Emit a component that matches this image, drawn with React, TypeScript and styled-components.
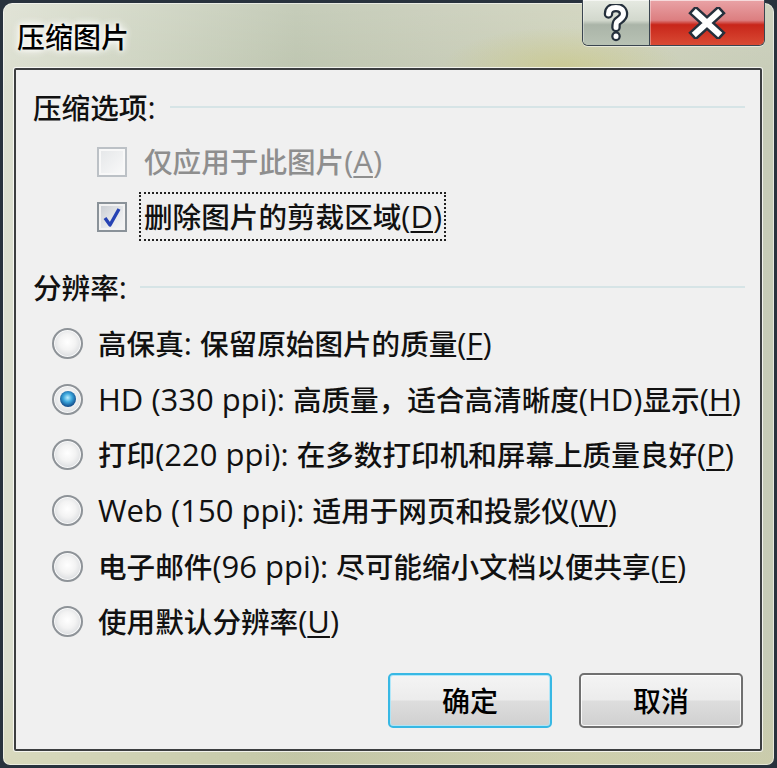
import React from 'react';
import styled, { createGlobalStyle } from 'styled-components';

const Global = createGlobalStyle`
  html, body { margin: 0; padding: 0; background: #26303a; }
  body { font-family: "Noto Sans CJK SC", sans-serif; }
  * { box-sizing: border-box; }
`;

const Window = styled.div`
  width: 777px;
  height: 768px;
  padding: 3px;
  background: #28323d;
  display: flex;
`;

const Frame = styled.div`
  flex: 1;
  display: flex;
  flex-direction: column;
  border-radius: 9px 9px 7px 7px;
  background:
    radial-gradient(ellipse 120px 40px at 560px 64px, rgba(200, 196, 120, 0.55), transparent),
    linear-gradient(180deg, rgba(255,255,255,0.15) 0%, transparent 12%, transparent 88%, rgba(210,205,150,0.35) 100%),
    linear-gradient(90deg, #dcdfd0 0%, #cdd3c0 18%, #bcc4ae 38%, #c4c9b4 55%, #ccd0b8 75%, #c6cbb6 100%);
  box-shadow: inset 0 0 0 1px rgba(255, 255, 255, 0.55);
`;

const TitleBar = styled.div`
  height: 65px;
  display: flex;
  align-items: flex-start;
  padding: 0 9px 0 14px;
`;

const Title = styled.div`
  flex: 1;
  margin-top: 15px;
  font-weight: 500;
  font-size: 28px;
  line-height: 36px;
  color: #000;
  text-shadow: 0 0 4px #fff, 0 0 8px #fff, 0 0 10px rgba(255,255,255,0.8);
`;

const Captions = styled.div`
  display: flex;
  margin-top: -3px;
  border: 1px solid #3a4550;
  border-top: none;
  border-radius: 0 0 6px 6px;
  overflow: hidden;
  box-shadow: 0 1px 0 rgba(255,255,255,0.5);
`;

const CaptionButton = styled.div<{ $variant: 'help' | 'close' }>`
  width: ${p => (p.$variant === 'help' ? '66px' : '115px')};
  height: 45px;
  display: flex;
  align-items: center;
  justify-content: center;
  border-left: ${p => (p.$variant === 'close' ? '1px solid #3a4550' : 'none')};
  background: ${p =>
    p.$variant === 'help'
      ? 'linear-gradient(180deg, #e6eae2 0%, #d2d8cd 45%, #aab4a8 55%, #b8c2b4 100%)'
      : 'linear-gradient(180deg, #e9a3a6 0%, #dc7e80 45%, #c8261a 55%, #d94a34 100%)'};
  box-shadow: inset 0 1px 0 rgba(255,255,255,0.6), inset 1px 0 0 rgba(255,255,255,0.35);
`;

const Panel = styled.div`
  flex: 1;
  margin: 0 12px 14px 11px;
  border: 2px solid #3c3e40;
  border-radius: 2px;
  background: #f0f0f0;
  box-shadow: 0 0 0 1px rgba(255, 255, 255, 0.75);
  display: flex;
  flex-direction: column;
  padding: 10px 0 0 0;
  color: #111;
  font-size: 28.6px;
  font-weight: 500;
`;

const L = styled.span`
  font-family: "Open Sans", "Noto Sans", sans-serif;
  font-size: 31px;
  font-weight: 500;
`;

const GroupHeader = styled.div<{ $gap: number; $top?: number }>`
  height: 54px;
  margin-top: ${p => p.$top ?? 0}px;
  display: flex;
  align-items: center;
  gap: ${p => p.$gap}px;
  padding: 0 15px 0 17px;
  line-height: 1;
`;

const Rule = styled.div`
  flex: 1;
  height: 2px;
  background: #d6e4e6;
`;

const OptionRow = styled.div<{ $indent: number; $h: number; $gap: number }>`
  height: ${p => p.$h}px;
  padding-left: ${p => p.$indent}px;
  display: flex;
  align-items: center;
  gap: ${p => p.$gap}px;
  line-height: 1;
`;

const CheckBox = styled.span<{ $disabled?: boolean }>`
  width: 30px;
  height: 30px;
  flex: none;
  display: flex;
  align-items: center;
  justify-content: center;
  border: 2px solid ${p => (p.$disabled ? '#bcc1c6' : '#8a9299')};
  background: ${p =>
    p.$disabled
      ? 'linear-gradient(135deg, #e4e6e8, #fafafa)'
      : 'linear-gradient(135deg, #c6cad0 0%, #e8eaec 60%, #f6f6f6 100%)'};
  box-shadow: inset 0 0 0 2px ${p => (p.$disabled ? '#f8f8f8' : '#f2f2f2')};
`;

const Label = styled.span<{ $disabled?: boolean; $focused?: boolean }>`
  color: ${p => (p.$disabled ? '#8e8e8e' : '#111')};
  padding: ${p => (p.$focused ? '7px 2px 7px 3px' : '0')};
  border: ${p => (p.$focused ? '2px dotted #222' : 'none')};
  white-space: nowrap;
`;

const Key = styled.span`
  text-decoration: underline;
  text-decoration-thickness: 2px;
  text-underline-offset: 3px;
`;

const Radio = styled.span<{ $checked?: boolean }>`
  width: 31px;
  height: 31px;
  flex: none;
  border-radius: 50%;
  border: 2px solid #8e9398;
  background: radial-gradient(circle at 50% 45%, #ffffff 0%, #f3f3f3 40%, #c9cdd2 100%);
  box-shadow: inset 0 0 0 1px rgba(255,255,255,0.8);
  display: flex;
  align-items: center;
  justify-content: center;
  &::after {
    content: '';
    display: ${p => (p.$checked ? 'block' : 'none')};
    width: 16px;
    height: 16px;
    border-radius: 50%;
    background: radial-gradient(circle at 48% 42%, #bdeeff 0%, #3aa6dc 35%, #14508f 70%, #0c2e5a 100%);
  }
`;

const RadioList = styled.div`
  margin-top: 2px;
  display: flex;
  flex-direction: column;
`;

const ButtonRow = styled.div`
  margin-top: 23px;
  display: flex;
  justify-content: flex-end;
  gap: 27px;
  padding-right: 17px;
`;

const Button = styled.div<{ $default?: boolean }>`
  width: 164px;
  height: 55px;
  border-radius: 5px;
  border: 2px solid ${p => (p.$default ? '#37b8e4' : '#707070')};
  background: linear-gradient(180deg, #f4f4f4 0%, #ececec 48%, #dddddd 52%, #d0d0d0 100%);
  box-shadow: inset 0 0 0 1px ${p => (p.$default ? 'rgba(170,230,250,0.9)' : 'rgba(255,255,255,0.85)')};
  display: flex;
  align-items: center;
  justify-content: center;
  font-weight: 500;
  font-size: 28px;
  color: #000;
  line-height: 1;
`;

const radios: { text: React.ReactNode; checked?: boolean }[] = [
  { text: <>高保真<L>: </L>保留原始图片的质量<L>(<Key>F</Key>)</L></> },
  { text: <><L>HD (330 ppi): </L>高质量，适合高清晰度<L>(HD)</L>显示<L>(<Key>H</Key>)</L></>, checked: true },
  { text: <>打印<L>(220 ppi): </L>在多数打印机和屏幕上质量良好<L>(<Key>P</Key>)</L></> },
  { text: <><L>Web (150 ppi): </L>适用于网页和投影仪<L>(<Key>W</Key>)</L></> },
  { text: <>电子邮件<L>(96 ppi): </L>尽可能缩小文档以便共享<L>(<Key>E</Key>)</L></> },
  { text: <>使用默认分辨率<L>(<Key>U</Key>)</L></> },
];

export default function App() {
  return (
    <>
      <Global />
      <Window>
        <Frame>
          <TitleBar>
            <Title>压缩图片</Title>
            <Captions>
              <CaptionButton $variant="help">
                <svg width="26" height="38" viewBox="0 0 26 38">
                  <g fill="none" strokeLinecap="round" strokeLinejoin="round">
                    <path d="M5.5 10 C5.5 5 9 3.5 13 3.5 C17.5 3.5 20.5 6 20.5 10 C20.5 14.5 16 15.5 14 18 C13 19 13 20.5 13 23.5" stroke="#25303c" strokeWidth="9.5" />
                    <path d="M13 32 L13 32.5" stroke="#25303c" strokeWidth="9.5" />
                    <path d="M5.5 10 C5.5 5 9 3.5 13 3.5 C17.5 3.5 20.5 6 20.5 10 C20.5 14.5 16 15.5 14 18 C13 19 13 20.5 13 23.5" stroke="#fff" strokeWidth="5" />
                    <path d="M13 32 L13 32.5" stroke="#fff" strokeWidth="5" />
                  </g>
                </svg>
              </CaptionButton>
              <CaptionButton $variant="close">
                <svg width="40" height="32" viewBox="0 0 40 32">
                  <g fill="none" strokeLinecap="square">
                    <path d="M9 6 L31 26 M31 6 L9 26" stroke="#25303c" strokeWidth="11" />
                    <path d="M9 6 L31 26 M31 6 L9 26" stroke="#fff" strokeWidth="6" />
                  </g>
                </svg>
              </CaptionButton>
            </Captions>
          </TitleBar>
          <Panel>
            <GroupHeader $gap={14}>
              <span>压缩选项<L>:</L></span>
              <Rule />
            </GroupHeader>
            <OptionRow $indent={81} $h={55} $gap={17}>
              <CheckBox $disabled />
              <Label $disabled>仅应用于此图片<L>(<Key>A</Key>)</L></Label>
            </OptionRow>
            <OptionRow $indent={81} $h={55} $gap={12}>
              <CheckBox>
                <svg width="20" height="22" viewBox="0 0 20 22">
                  <path d="M3 12 L8 19 L17 3" fill="none" stroke="#2643b4" strokeWidth="3.4" strokeLinejoin="round" />
                </svg>
              </CheckBox>
              <Label $focused>删除图片的剪裁区域<L>(<Key>D</Key>)</L></Label>
            </OptionRow>
            <GroupHeader $gap={13} $top={16}>
              <span>分辨率<L>:</L></span>
              <Rule />
            </GroupHeader>
            <RadioList>
              {radios.map((r, i) => (
                <OptionRow key={i} $indent={36} $h={55.6} $gap={15}>
                  <Radio $checked={r.checked} />
                  <Label>{r.text}</Label>
                </OptionRow>
              ))}
            </RadioList>
            <ButtonRow>
              <Button $default>确定</Button>
              <Button>取消</Button>
            </ButtonRow>
          </Panel>
        </Frame>
      </Window>
    </>
  );
}
